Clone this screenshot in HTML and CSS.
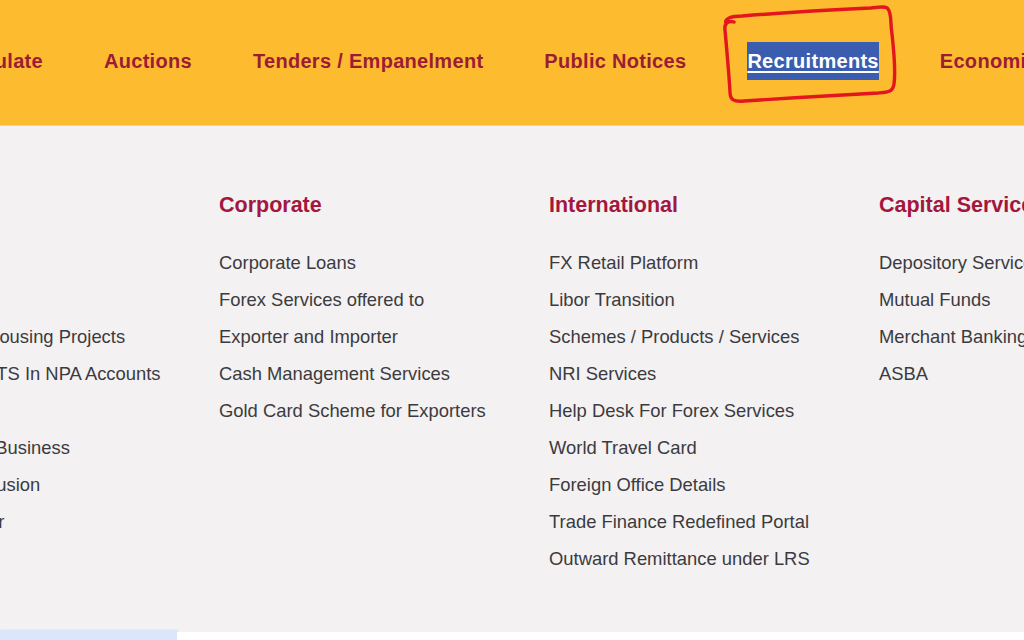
FILE: index.html
```html
<!DOCTYPE html>
<html lang="en">
<head>
    <meta charset="UTF-8">
    <meta name="viewport" content="width=device-width, initial-scale=1.0">
    <title>Recruitments</title>
    <link rel="stylesheet" href="styles.css">
</head>
<body>
<header class="topnav">
    <ul class="menu">
        <li><a href="#">EMI Calculate</a></li>
        <li><a href="#">Auctions</a></li>
        <li><a href="#">Tenders / Empanelment</a></li>
        <li><a href="#">Public Notices</a></li>
        <li><a href="#" class="selected">Recruitments</a></li>
        <li><a href="#">Economic Research</a></li>
    </ul>

    <!-- hand drawn mark round the selected item -->
    <svg class="scribble" width="190" height="110" viewBox="0 0 190 110">
        <path d="M8 24 C 6 18, 14 16, 24 16 C 60 13, 110 10, 152 8 C 162 7, 168 6, 170 9
                 C 174 14, 172 22, 174 34 C 176 52, 178 70, 176 84 C 175 92, 170 92, 160 93
                 C 120 95, 70 98, 26 101 C 16 102, 12 100, 12 92 C 11 74, 9 52, 7 30
                 C 6 24, 10 20, 16 22"
              fill="none" stroke="#e3161d" stroke-width="3.4" stroke-linecap="round" stroke-linejoin="round"/>
    </svg>
</header>

<section class="mega">
    <div class="col">
        <h3>Personal</h3>
        <ul>
            <li>Deposits</li>
            <li>Retail Loans</li>
            <li>Finance for Housing Projects</li>
            <li>Recovery / OTS In NPA Accounts</li>
            <li>Cards</li>
            <li>Government Business</li>
            <li>Financial Inclusion</li>
            <li>Priority Sector</li>
        </ul>
    </div>
    <div class="col">
        <h3>Corporate</h3>
        <ul>
            <li>Corporate Loans</li>
            <li>Forex Services offered to</li>
            <li>Exporter and Importer</li>
            <li>Cash Management Services</li>
            <li>Gold Card Scheme for Exporters</li>
        </ul>
    </div>
    <div class="col">
        <h3>International</h3>
        <ul>
            <li>FX Retail Platform</li>
            <li>Libor Transition</li>
            <li>Schemes / Products / Services</li>
            <li>NRI Services</li>
            <li>Help Desk For Forex Services</li>
            <li>World Travel Card</li>
            <li>Foreign Office Details</li>
            <li>Trade Finance Redefined Portal</li>
            <li>Outward Remittance under LRS</li>
        </ul>
    </div>
    <div class="col">
        <h3>Capital Services</h3>
        <ul>
            <li>Depository Services</li>
            <li>Mutual Funds</li>
            <li>Merchant Banking</li>
            <li>ASBA</li>
        </ul>
    </div>
</section>

<div class="page-bottom">
    <div class="tab"></div>
    <div class="rest"></div>
</div>
</body>
</html>
```

FILE: styles.css
```css
body {
    margin: 0;
    width: 1024px;
    height: 640px;
    overflow: hidden;
    font-family: "Liberation Sans", Arial, sans-serif;
    background: #f3f1f1;
}

/* top yellow bar */
.topnav {
    position: relative;
    height: 126px;
    background: #fdbb30;
    border-bottom: 1px solid #f6d28a;
    box-sizing: border-box;
}
.menu {
    list-style: none;
    margin: 0 0 0 -91px;
    padding: 0 0 4px 0;
    height: 100%;
    box-sizing: border-box;
    display: flex;
    align-items: center;
    gap: 61px;
    white-space: nowrap;
}
.menu a {
    display: block;
    line-height: 38px;
    font-size: 20px;
    font-weight: bold;
    letter-spacing: 0.3px;
    color: #9b1c35;
    text-decoration: none;
}
.menu a.selected {
    background: #3a5db0;
    color: #fff;
    text-decoration: underline;
    text-decoration-thickness: 2px;
    text-underline-offset: 3px;
}
.scribble {
    position: absolute;
    left: 718px;
    top: 0;
}

/* dropdown panel */
.mega {
    height: 504px;
    box-sizing: border-box;
    padding-top: 64px;
    margin-left: -111px;
    display: grid;
    grid-template-columns: repeat(4, 330px);
    white-space: nowrap;
}
.col h3 {
    margin: 0 0 24px 0;
    font-size: 21.5px;
    line-height: 30px;
    color: #a3173f;
}
.col ul {
    list-style: none;
    margin: 0;
    padding: 0;
}
.col li {
    font-size: 18.4px;
    line-height: 37px;
    color: #3b3b3f;
}

.page-bottom {
    display: flex;
    height: 10px;
}
.page-bottom .tab {
    width: 177px;
    background: #dbe6fb;
    box-shadow: 1px 0 2px rgba(0,0,0,0.08);
}
.page-bottom .rest {
    flex: 1;
    margin-top: 2px;
    background: #fff;
}
```
